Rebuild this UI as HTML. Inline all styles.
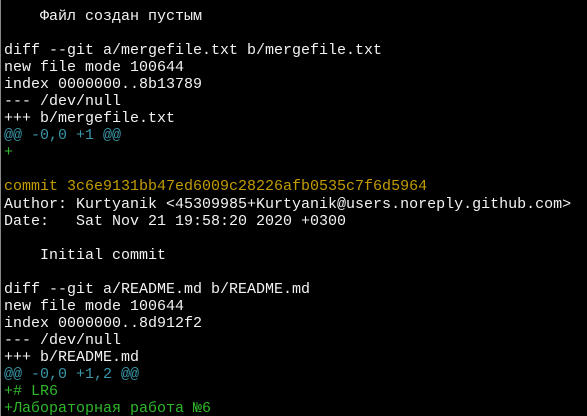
<!DOCTYPE html>
<html><head><meta charset="utf-8"><style>
html,body{margin:0;padding:0;background:#000;width:587px;height:416px;overflow:hidden}
body{border-left:1px solid #888;box-sizing:border-box}
pre{margin:0;padding:8px 0 0 3px;font-family:"Liberation Mono","DejaVu Sans Mono",monospace;font-size:15px;line-height:17.05px;color:#f2f2f2;white-space:pre}
.c{color:#3a96a8}.g{color:#2fb82a}.y{color:#c19c00}
</style></head><body><pre>    Файл создан пустым

diff --git a/mergefile.txt b/mergefile.txt
new file mode 100644
index 0000000..8b13789
--- /dev/null
+++ b/mergefile.txt
<span class="c">@@ -0,0 +1 @@</span>
<span class="g">+</span>

<span class="y">commit 3c6e9131bb47ed6009c28226afb0535c7f6d5964</span>
Author: Kurtyanik &lt;45309985+Kurtyanik@users.noreply.github.com&gt;
Date:   Sat Nov 21 19:58:20 2020 +0300

    Initial commit

diff --git a/README.md b/README.md
new file mode 100644
index 0000000..8d912f2
--- /dev/null
+++ b/README.md
<span class="c">@@ -0,0 +1,2 @@</span>
<span class="g">+# LR6</span>
<span class="g">+Лабораторная работа №6</span></pre></body></html>
